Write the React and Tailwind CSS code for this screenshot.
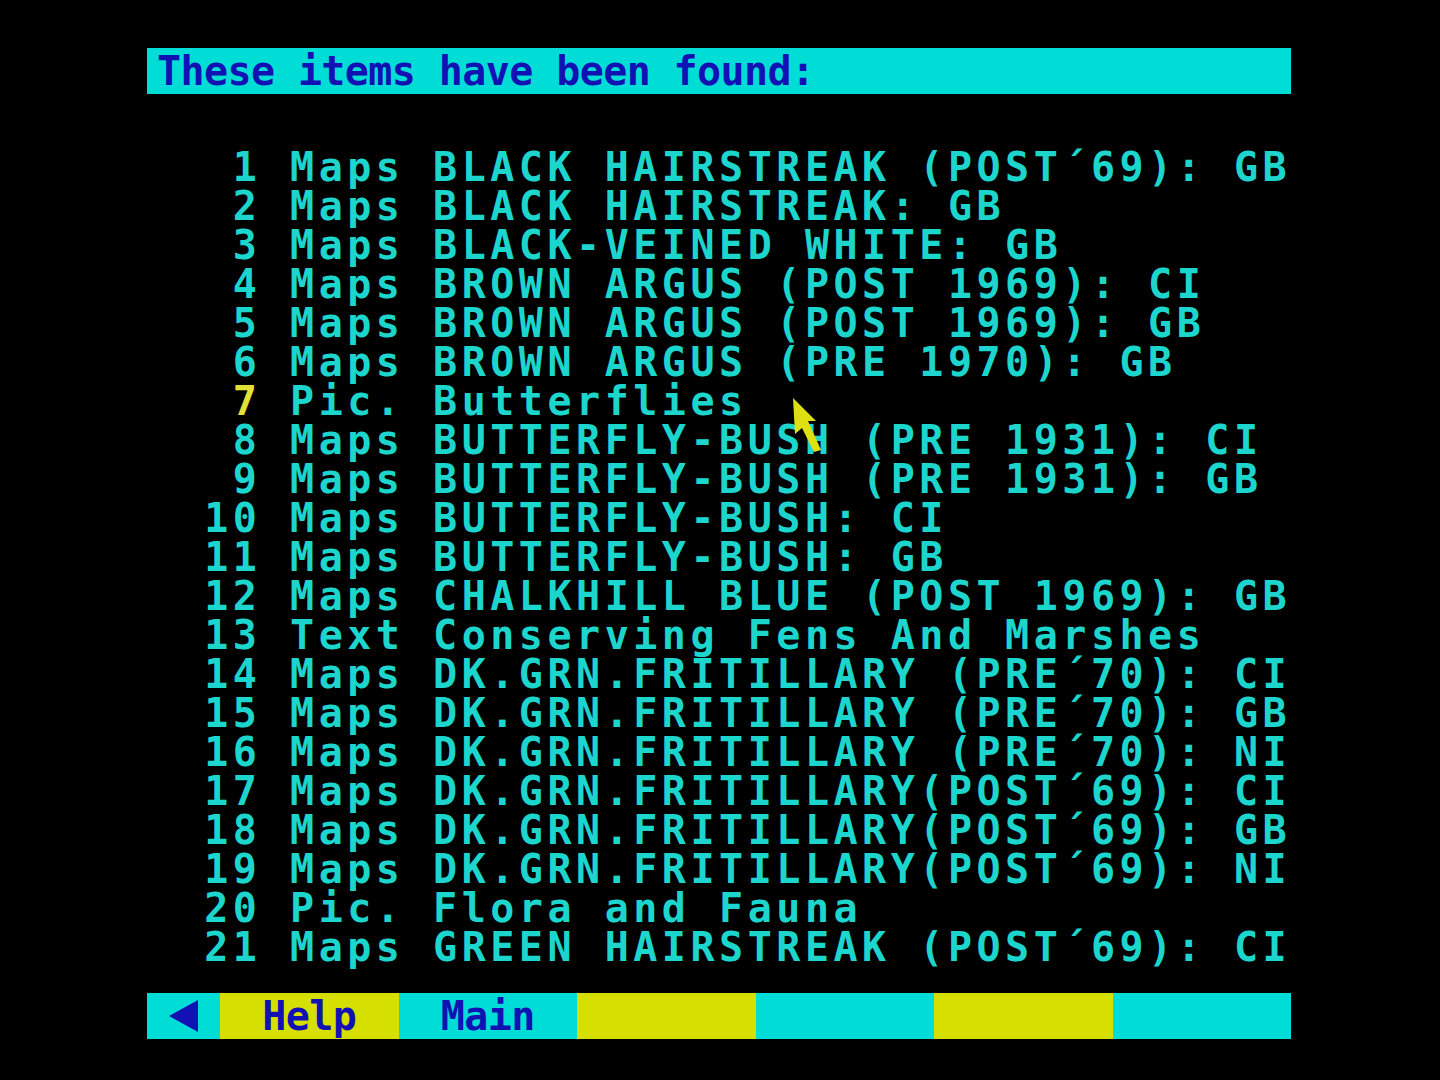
import React from "react";

const ROWS = [
  ["1", "Maps", "BLACK HAIRSTREAK (POST´69): GB"],
  ["2", "Maps", "BLACK HAIRSTREAK: GB"],
  ["3", "Maps", "BLACK-VEINED WHITE: GB"],
  ["4", "Maps", "BROWN ARGUS (POST 1969): CI"],
  ["5", "Maps", "BROWN ARGUS (POST 1969): GB"],
  ["6", "Maps", "BROWN ARGUS (PRE 1970): GB"],
  ["7", "Pic.", "Butterflies", true],
  ["8", "Maps", "BUTTERFLY-BUSH (PRE 1931): CI"],
  ["9", "Maps", "BUTTERFLY-BUSH (PRE 1931): GB"],
  ["10", "Maps", "BUTTERFLY-BUSH: CI"],
  ["11", "Maps", "BUTTERFLY-BUSH: GB"],
  ["12", "Maps", "CHALKHILL BLUE (POST 1969): GB"],
  ["13", "Text", "Conserving Fens And Marshes"],
  ["14", "Maps", "DK.GRN.FRITILLARY (PRE´70): CI"],
  ["15", "Maps", "DK.GRN.FRITILLARY (PRE´70): GB"],
  ["16", "Maps", "DK.GRN.FRITILLARY (PRE´70): NI"],
  ["17", "Maps", "DK.GRN.FRITILLARY(POST´69): CI"],
  ["18", "Maps", "DK.GRN.FRITILLARY(POST´69): GB"],
  ["19", "Maps", "DK.GRN.FRITILLARY(POST´69): NI"],
  ["20", "Pic.", "Flora and Fauna"],
  ["21", "Maps", "GREEN HAIRSTREAK (POST´69): CI"],
];

const FONT = "font-['DejaVu_Sans_Mono','Liberation_Mono',monospace] font-bold text-[40px]";

function Cursor() {
  return (
    <svg className="absolute left-[790px] top-[395px]" width="36" height="62" viewBox="790 395 36 62">
      <polygon
        points="793,398 816,421 808,421 821,450 814,452 802,428 795,434"
        fill="#dfe012"
      />
    </svg>
  );
}

export default function App() {
  return (
    <div className="relative h-[1080px] w-[1440px] overflow-hidden bg-black">
      <div className="ml-[147px] flex w-[1144px] flex-col">
        {/* title bar */}
        <div className={`mt-[48px] h-[46px] bg-[#00dcd6] pl-[10px] leading-[46px] tracking-[-0.6px] text-[#1212b4] ${FONT}`}>
          These items have been found:
        </div>

        {/* results */}
        <div className={`mt-[54px] flex flex-col tracking-[4.52px] text-[#1cd6ce] ${FONT}`}>
          {ROWS.map(([n, kind, title, sel]) => (
            <div key={n} className="h-[39px] whitespace-pre leading-[39px]">
              {"  "}
              <span className={sel ? "text-[#e2e236]" : ""}>{n.padStart(2, " ")}</span>
              {" " + kind + " " + title}
            </div>
          ))}
        </div>

        {/* function keys */}
        <div className={`mt-[26px] grid h-[46px] grid-cols-[73px_repeat(6,1fr)] leading-[46px] tracking-[-0.6px] text-[#1212b4] ${FONT}`}>
          <div className="flex items-center justify-center bg-[#00dcd6]">
            <svg width="32" height="34" viewBox="0 0 32 34">
              <polygon points="1,17 30,1 30,33" fill="#1212b4" />
            </svg>
          </div>
          <div className="bg-[#d6e000] text-center">Help</div>
          <div className="bg-[#00dcd6] text-center">Main</div>
          <div className="bg-[#d6e000]" />
          <div className="bg-[#00dcd6]" />
          <div className="bg-[#d6e000]" />
          <div className="bg-[#00dcd6]" />
        </div>
      </div>
      <Cursor />
    </div>
  );
}
